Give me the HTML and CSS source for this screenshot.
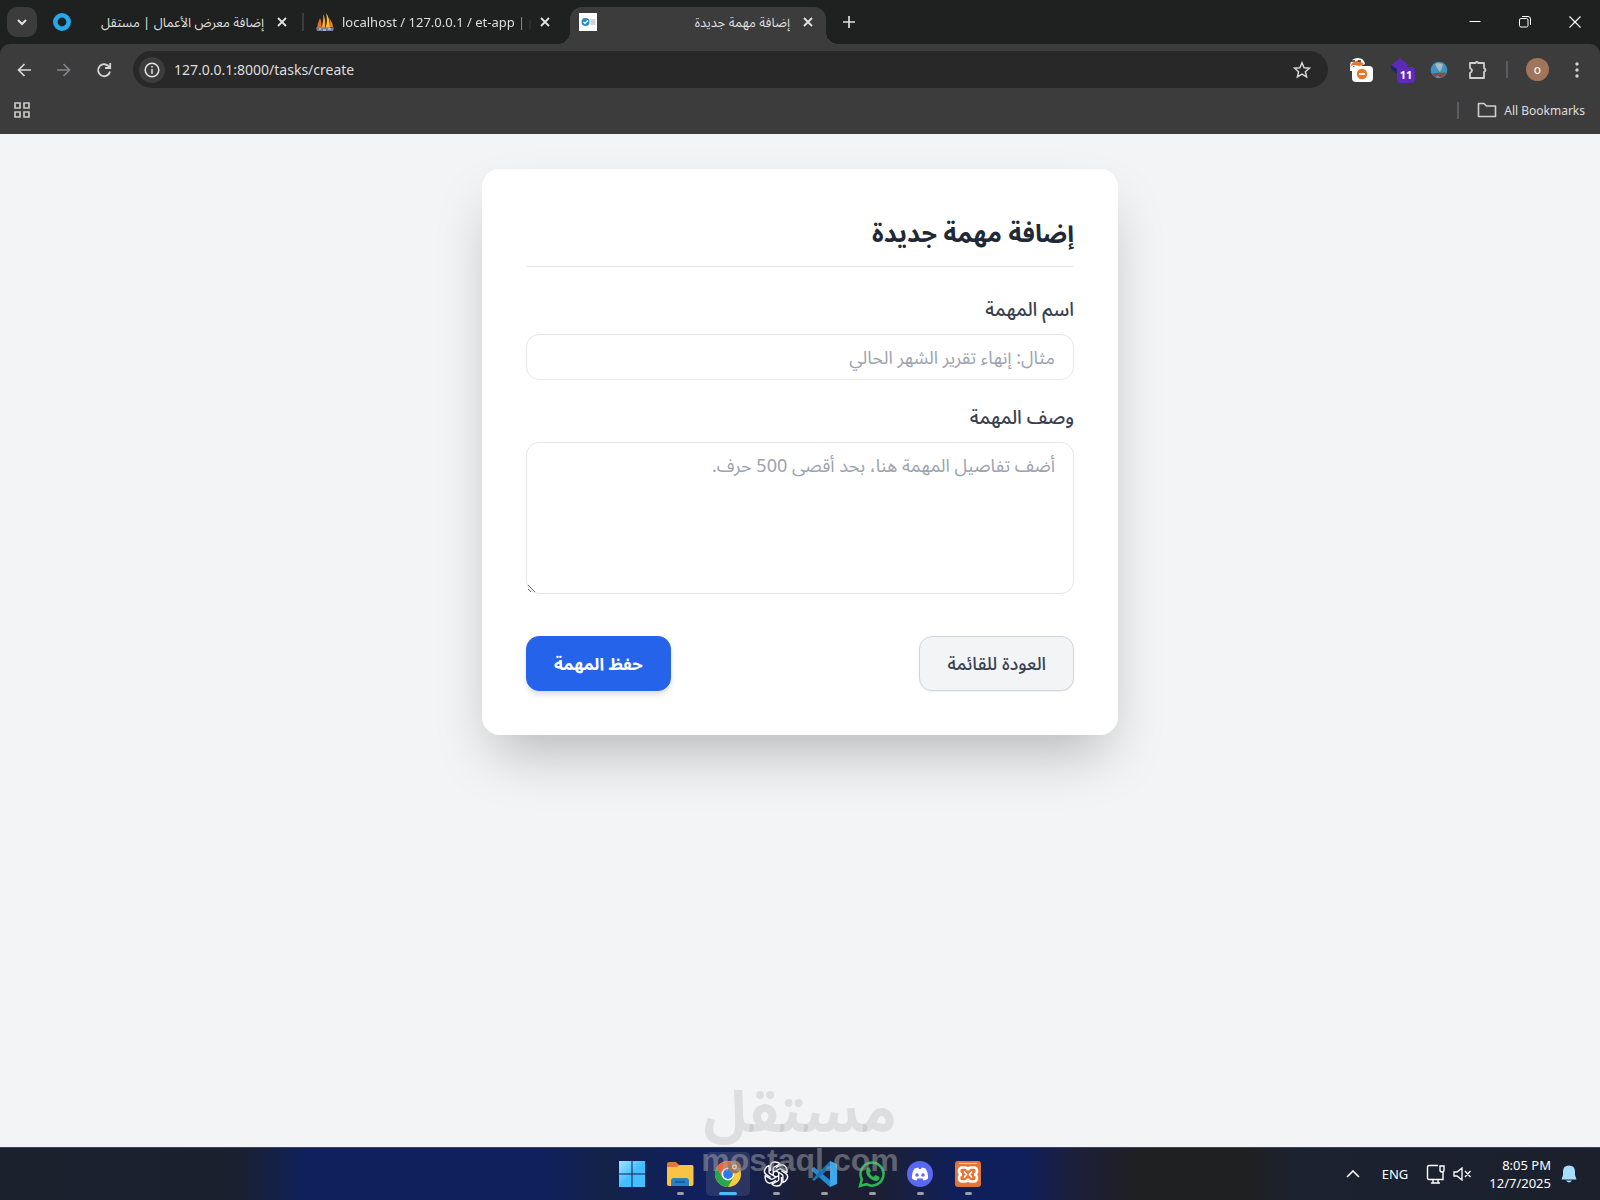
FILE: index.html
```html
<!DOCTYPE html>
<html lang="en">
  <head>
    <meta charset="UTF-8">
    <meta name="viewport" content="width=device-width, initial-scale=1.0">
    <title>إضافة مهمة جديدة</title>
    <link rel="stylesheet" href="styles.css">
  </head>
  <body>
    <!-- Browser window -->
    <header class="browser">
      <div class="tab-strip">
        <button class="tab-search" aria-label="Search tabs">
          <svg width="12" height="12" viewBox="0 0 12 12"><path d="M2 4l4 4 4-4" fill="none" stroke="#e3e3e3" stroke-width="2"/></svg>
        </button>
        <div class="tab tab-first">
          <svg width="18" height="18" viewBox="0 0 18 18"><circle cx="9" cy="9" r="6.7" fill="none" stroke="#26a9ec" stroke-width="4.6"/></svg>
          <a class="tab-title" dir="rtl" href="#">إضافة معرض الأعمال | مستقل</a>
          <button class="close" aria-label="Close"><svg width="10" height="10" viewBox="0 0 10 10"><path d="M1 1l8 8M9 1l-8 8"/></svg></button>
        </div>
        <div class="tab tab-second">
          <svg width="18" height="18" viewBox="0 0 18 18"><path d="M1 15Q2 9 4 5Q6 8 5 15z" fill="#d9702f"/><path d="M5 15Q8 8 7 1Q10 6 9 15z" fill="#f7a623"/><path d="M9.500 15Q12 8 10 0Q14 5 14 15z" fill="#f9bd3a"/><path d="M14 14Q15 9 13 5Q17 10 17 14z" fill="#ee7f2c"/><path d="M0 14.500h18l-1 3.500H1z" fill="#777a9b"/><path d="M3 16h2m2 1h3m2-1h3" stroke="#dcdcec"/></svg>
          <a class="tab-title fade" href="#">localhost / 127.0.0.1 / et-app | p</a>
          <button class="close" aria-label="Close"><svg width="10" height="10" viewBox="0 0 10 10"><path d="M1 1l8 8M9 1l-8 8"/></svg></button>
        </div>
        <div class="tab tab-active">
          <svg width="18" height="18" viewBox="0 0 18 18"><path fill="#fff" d="M0 0h18v18H0z"/><circle cx="6.5" cy="9" r="4" fill="#2590c5"/><path d="M4.500 9l1.500 1.500 3-3" fill="none" stroke="#fff" stroke-width="1.200"/><path d="M11.500 7h5M11.500 9h5M11.500 11h5" stroke="#9ab"/></svg>
          <a class="tab-title" dir="rtl" href="#">إضافة مهمة جديدة</a>
          <button class="close" aria-label="Close"><svg width="10" height="10" viewBox="0 0 10 10"><path d="M1 1l8 8M9 1l-8 8"/></svg></button>
        </div>
        <button class="new-tab" aria-label="New tab"><svg width="12" height="12" viewBox="0 0 12 12"><path d="M6 0v12M0 6h12" stroke="#dedede" stroke-width="1.700"/></svg></button>
        <div class="window-buttons">
          <button aria-label="Minimize"><svg width="12" height="12" viewBox="0 0 12 12"><path d="M.500 5.500h11" stroke="#fff"/></svg></button>
          <button aria-label="Restore"><svg width="12" height="12" viewBox="0 0 12 12"><path d="M.500 4q0-1.500 1.500-1.500h5.500q1.500 0 1.500 1.500v5.500q0 1.500-1.500 1.500H2Q.500 11 .500 9.500zM3 .500h6q2.500 0 2.500 2.500v6" fill="none" stroke="#fff"/></svg></button>
          <button aria-label="Close window"><svg width="12" height="12" viewBox="0 0 12 12"><path d="M.500.500l11 11M11.500.500l-11 11" stroke="#fff" stroke-width="1.200"/></svg></button>
        </div>
      </div>

      <div class="toolbar">
        <button class="nav-btn" aria-label="Back"><svg width="14" height="14" viewBox="0 0 14 14"><path d="M14 7H1.500M7.500 1l-6 6 6 6" fill="none" stroke="#d6d6d6" stroke-width="1.700"/></svg></button>
        <button class="nav-btn" aria-label="Forward"><svg width="14" height="14" viewBox="0 0 14 14"><path d="M0 7h12.500M6.500 1l6 6-6 6" fill="none" stroke="#85868a" stroke-width="1.600"/></svg></button>
        <button class="nav-btn" aria-label="Reload"><svg width="16" height="16" viewBox="0 0 16 16"><path d="M13.200 5A6 6 0 1 0 14 9.500M14.200 1v5H9" fill="none" stroke="#d6d6d6" stroke-width="1.800"/></svg></button>
        <div class="address-bar">
          <button class="site-info" aria-label="Site information"><svg width="16" height="16" viewBox="0 0 16 16"><circle cx="8" cy="8" r="6.800" fill="none" stroke="#e3e3e3" stroke-width="1.500"/><path d="M8 7v5M8 4v1.600" stroke="#e3e3e3" stroke-width="1.500"/></svg></button>
          <input class="url" type="text" aria-label="Address" value="127.0.0.1:8000/tasks/create">
          <button aria-label="Bookmark this page"><svg width="18" height="18" viewBox="0 0 18 18"><path d="M9 1.800l2.100 4.900 5.300.500-4 3.500 1.200 5.200L9 13.100l-4.600 2.800 1.200-5.200-4-3.500 5.300-.500z" fill="none" stroke="#d6d6d6" stroke-width="1.500"/></svg></button>
        </div>
        <div class="extensions">
          <button aria-label="Ad filter"><svg width="26" height="26" viewBox="0 0 26 26"><path d="M2 8Q3 1 10 1q6 0 7 6l-4 2H5v5H2z" fill="#fff"/><path d="M4 6l6-3 6 4-4 2-7-1-3 2z" fill="#e8762c"/><path d="M3 4h4M10 4h3" stroke="#333" stroke-width="1.500"/><rect x="4" y="9" width="21" height="16" rx="4" fill="#fff"/><circle cx="14" cy="17" r="5.200" fill="#e8762c"/><path d="M11 17h6" stroke="#fff" stroke-width="1.800"/></svg></button>
          <button class="ext-count" aria-label="Extension, 11 items"><svg width="26" height="26" viewBox="0 0 26 26"><path d="M2 8l9-7 9 7-9 8z" fill="#5b2bb5"/><path d="M2 8v4l9 7v-5z" fill="#182a66"/></svg><span class="badge">11</span></button>
          <button class="globe" aria-label="Globe"><svg width="18" height="18" viewBox="0 0 18 18"><circle cx="9" cy="9" r="8.300" fill="#3d96c1"/><path d="M5 3l3-1 5 1-1 4-2 4-3-4z" fill="#a9b8c1"/><path d="M2 12.500q6-1 14-1-2 5-7 5t-7-4z" fill="#924838"/><path d="M7 14l4 3H6z" fill="#33a1d6"/></svg></button>
          <button aria-label="Extensions"><svg width="20" height="20" viewBox="0 0 20 20"><path d="M2 3h5.500q1-2 3 0H16v5q3 2 0 4v6H2v-5q4-2.500 0-5z" fill="none" stroke="#cfcfcf" stroke-width="1.800" stroke-linejoin="round"/></svg></button>
        </div>
        <span class="divider"></span>
        <button class="profile" aria-label="Profile">o</button>
        <button class="menu" aria-label="Menu"><svg width="4" height="18" viewBox="0 0 4 18"><g fill="#d2d2d2"><circle cx="2" cy="3" r="1.700"/><circle cx="2" cy="9" r="1.700"/><circle cx="2" cy="15" r="1.700"/></g></svg></button>
      </div>

      <nav class="bookmarks">
        <button aria-label="Apps"><svg width="16" height="16" viewBox="0 0 16 16"><path d="M1 1h5v5H1zM10 1h5v5h-5zM1 10h5v5H1zM10 10h5v5h-5z" fill="none" stroke="#c9c9c5" stroke-width="1.700"/></svg></button>
        <span class="divider push"></span>
        <a class="all-bookmarks" href="#">
          <svg width="20" height="16" viewBox="0 0 20 16"><path d="M1.500 1.500h5.500l2.500 2.500h9v10.500h-17z" fill="none" stroke="#cfcfcf" stroke-width="1.600" stroke-linejoin="round"/></svg>
          All Bookmarks
        </a>
      </nav>
    </header>

    <!-- Task page -->
    <main class="page" dir="rtl" lang="ar">
      <form class="card">
        <h1>إضافة مهمة جديدة</h1>
        <label for="name">اسم المهمة</label>
        <input id="name" class="field" type="text" placeholder="مثال: إنهاء تقرير الشهر الحالي">
        <label for="description">وصف المهمة</label>
        <textarea id="description" class="field" placeholder="أضف تفاصيل المهمة هنا، بحد أقصى 500 حرف."></textarea>
        <div class="actions">
          <a class="btn btn-back" href="#">العودة للقائمة</a>
          <button class="btn btn-save" type="button">حفظ المهمة</button>
        </div>
      </form>
    </main>

    <div class="watermark" aria-hidden="true">
      <span class="mark-ar" lang="ar">مستقل</span>
      <span class="mark-en">mostaql.com</span>
    </div>

    <!-- Taskbar -->
    <footer class="taskbar">
      <div class="apps">
        <button class="app" aria-label="Start"><svg width="26" height="26" viewBox="0 0 26 26"><defs><linearGradient id="win" x2="1" y2="1"><stop stop-color="#a4e3ff"/><stop offset=".5" stop-color="#42bfff"/></linearGradient></defs><path fill="url(#win)" d="M0 0h12.500v12.500H0zM13.500 0H26v12.500H13.500zM0 13.500h12.500V26H0zM13.500 13.500H26V26H13.500z"/></svg></button>
        <button class="app running" aria-label="File Explorer"><svg width="28" height="26" viewBox="0 0 28 26"><path d="M1 3q0-2 2-2h7l3 3v4H1z" fill="#e27b2c"/><path d="M1 6h10l2-2h13q1.500 0 1.500 2v17q0 2-2 2H3q-2 0-2-2z" fill="#fbc346"/><path d="M5 25v-5q0-3 3-3h12q3 0 3 3v5z" fill="#2283bd"/><path d="M9 21h10" stroke="#176095" stroke-width="2"/></svg></button>
        <button class="app current" aria-label="Google Chrome"><svg width="28" height="28" viewBox="0 0 28 28"><circle cx="14" cy="14" r="13" fill="#f9cb3a"/><path d="M2.700 7.500A13 13 0 0 1 25.300 7.500H14L8.400 17.200z" fill="#e9663f"/><path d="M2.700 7.500A13 13 0 0 0 14 27l5.600-9.800H8.400z" fill="#29a64c"/><circle cx="14" cy="14" r="6.400" fill="#fff"/><circle cx="14" cy="14" r="4.900" fill="#2879ed"/><circle cx="20.500" cy="7" r="6.500" fill="#a07558"/><circle cx="20.500" cy="7" r="1.800" fill="none" stroke="#fff" stroke-width="1.200"/></svg></button>
        <button class="app running" aria-label="ChatGPT"><svg width="26" height="26" viewBox="-13 -13 26 26"><defs><path id="petal" d="M-5.500-3V-7.200Q-5.500-12-.900-12 2-12 4-10.200L-1.700-7Q-2.700-6.400-2.700-5.300V1.600"/></defs><g fill="none" stroke="#fff" stroke-width="1.400" stroke-linejoin="round"><use href="#petal"/><use href="#petal" transform="rotate(60)"/><use href="#petal" transform="rotate(120)"/><use href="#petal" transform="rotate(180)"/><use href="#petal" transform="rotate(240)"/><use href="#petal" transform="rotate(300)"/></g></svg></button>
        <button class="app running" aria-label="Visual Studio Code"><svg width="26" height="26" viewBox="0 0 26 26"><path d="M1 7.500l2-1.500 16 13v7L1 10z" fill="#2489cf"/><path d="M1 18.500L19 0v7L3 20z" fill="#1673b5"/><path d="M19 0l7 3v20l-7 3z" fill="#3ba9ee"/></svg></button>
        <button class="app running" aria-label="WhatsApp"><svg width="28" height="28" viewBox="0 0 28 28"><path d="M2 26l1.800-6.600A11.500 11.500 0 1 1 8.500 24.200z" fill="none" stroke="#29b853" stroke-width="2.500"/><path d="M9 8l2-1 2 4-1.500 2q1.500 3 4 4l2-2 4 2q0 3-3 4-4 0-8-4-4-5-1.500-9z" fill="#29b853"/></svg></button>
        <button class="app running" aria-label="Discord"><svg width="26" height="26" viewBox="0 0 26 26"><circle cx="13" cy="13" r="13" fill="#5969f3"/><path d="M7.500 7.500L11 6.500l1 1.500h2l1-1.500 3.500 1q3 4.500 2.500 10-2 2-4.500 2l-1-2h-5l-1 2Q7 19.500 5 17.500 4.500 12 7.500 7.500z" fill="#fff"/><circle cx="10" cy="14" r="1.700" fill="#5969f3"/><circle cx="16" cy="14" r="1.700" fill="#5969f3"/></svg></button>
        <button class="app running" aria-label="XAMPP"><svg width="26" height="26" viewBox="0 0 26 26"><rect width="26" height="26" rx="3" fill="#e57535"/><path d="M4 2.500h18" stroke="#f7c9ad"/><path d="M7 6.500h3q3 0 3 3 0-3 3-3h3q3 0 3 3.500T19 13.500q3 0 3 3.500t-3 3.500h-3q-3 0-3-3 0 3-3 3H7q-3 0-3-3.500t3-3.500Q4 13.500 4 10t3-3.500z" fill="#e57535" stroke="#fff" stroke-width="2.600"/><path d="M9 10.500l2.500 3-2.500 3M17 10.500l-2.500 3 2.500 3" fill="none" stroke="#fff" stroke-width="1.600"/></svg></button>
      </div>
      <div class="tray">
        <button aria-label="Show hidden icons"><svg width="14" height="8" viewBox="0 0 14 8"><path d="M1 7l6-6 6 6" fill="none" stroke="#fff" stroke-width="1.600"/></svg></button>
        <button class="lang">ENG</button>
        <button class="quick" aria-label="Network and sound">
          <svg width="20" height="20" viewBox="0 0 20 20"><path d="M12 1.500H3q-1.500 0-1.500 1.500v11q0 1.500 1.500 1.500h14V8M7 16v3M12 16v3M5 19h9M14 2h4v4q0 2-2 2t-2-2z" fill="none" stroke="#fff" stroke-width="1.400"/></svg>
          <svg width="18" height="14" viewBox="0 0 18 14"><path d="M1 5h3l5-4v12L4 9H1zM12 4l5.500 6M17.500 4L12 10" fill="none" stroke="#fff" stroke-width="1.300"/></svg>
        </button>
        <button class="clock"><span>8:05 PM</span><span>12/7/2025</span></button>
        <button aria-label="Notifications"><svg width="16" height="18" viewBox="0 0 16 18"><path d="M8 .500Q14 .500 14 6.500V10l1.500 4.500H.500L2 10V6.500Q2 .500 8 .500zM5 15.500h6q-3 4-6 0z" fill="#a8ddfb"/></svg></button>
      </div>
    </footer>
  </body>
</html>
```
FILE: styles.css
```css
* {
  box-sizing: border-box;
}

body {
  margin: 0;
  min-height: 100vh;
  display: flex;
  flex-direction: column;
  position: relative;
  font-family: "Noto Sans", "Noto Sans Arabic", "DejaVu Sans", sans-serif;
  background-color: #f3f4f6;
}

button {
  padding: 0;
  border: 0;
  background: none;
  color: inherit;
  font: inherit;
}

a {
  color: inherit;
  text-decoration: none;
}

svg {
  display: block;
  flex: none;
}

/* Browser */
.browser {
  background-color: #1f2120;
  color: #dedede;
  font-size: 13px;
}

.tab-strip {
  display: flex;
  align-items: center;
  height: 44px;
  padding-left: 7px;
}

.tab-search {
  display: grid;
  place-items: center;
  width: 30px;
  height: 30px;
  border-radius: 10px;
  background-color: #3c3c3c;
}

.tab {
  display: flex;
  align-items: center;
  gap: 9px;
  height: 30px;
}

.tab-first {
  width: 267px;
  padding: 0 15px 0 16px;
  border-right: 2px solid #3c3c3c;
  height: 18px;
}

.tab-second {
  gap: 8px;
  width: 266px;
  padding: 0 20px 0 12px;
}

.tab-active {
  position: relative;
  width: 256px;
  height: 37px;
  align-self: flex-end;
  padding: 0 13px 7px 9px;
  border-radius: 12px 12px 0 0;
  background-color: #3c3c3c;
}

/* Flared feet of the active tab */
.tab-active::before,
.tab-active::after {
  content: "";
  position: absolute;
  bottom: 0;
  width: 12px;
  height: 12px;
}

.tab-active::before {
  right: 100%;
  background: radial-gradient(circle at 0 0, transparent 12px, #3c3c3c 12px);
}

.tab-active::after {
  left: 100%;
  background: radial-gradient(circle at 100% 0, transparent 12px, #3c3c3c 12px);
}

.tab-title {
  flex: 1;
  min-width: 0;
  overflow: hidden;
  white-space: nowrap;
  line-height: 24px;
}

.tab .close {
  padding-left: 4px;
}

.tab-second .close {
  padding-left: 0;
}

.fade {
  mask-image: linear-gradient(to right, #000 90%, transparent);
}

.close path {
  stroke: #e3e3e3;
  stroke-width: 1.8;
}

.new-tab {
  padding: 8px 17px;
}

.window-buttons {
  display: flex;
  margin-left: auto;
}

.window-buttons button {
  display: grid;
  place-items: center;
  width: 50px;
  height: 44px;
}

.toolbar {
  display: flex;
  align-items: center;
  height: 51px;
  padding: 0 21px 0 4px;
  border-radius: 10px 10px 0 0;
  background-color: #3c3c3c;
}

.nav-btn {
  display: grid;
  place-items: center;
  width: 40px;
  height: 36px;
}

.address-bar {
  display: flex;
  flex: 1;
  align-items: center;
  height: 37px;
  margin-left: 9px;
  padding: 0 17px 0 6px;
  border-radius: 19px;
  background-color: #282828;
}

.site-info {
  display: grid;
  place-items: center;
  width: 26px;
  height: 26px;
  border-radius: 50%;
  background-color: #3c3c3c;
}

.url {
  flex: 1;
  padding: 0 9px;
  border: 0;
  outline: 0;
  background: none;
  color: #dedede;
  font-family: inherit;
  font-size: 14px;
}

.extensions {
  display: flex;
  align-items: center;
  gap: 15px;
  margin-left: 20px;
}

.ext-count {
  position: relative;
}

.globe {
  margin-right: 5px;
}

.badge {
  position: absolute;
  right: 0;
  bottom: 0;
  width: 18px;
  border-radius: 4px;
  background-color: #5d2bb8;
  color: #fff;
  font-size: 11px;
  font-weight: bold;
  line-height: 16px;
}

.divider {
  width: 2px;
  height: 17px;
  margin: 0 18px;
  background-color: #5b5c61;
}

.profile {
  width: 23px;
  height: 23px;
  border-radius: 50%;
  background-color: #a1755c;
  color: #fff;
  font-size: 12px;
  line-height: 20px;
}

.menu {
  margin-left: 26px;
}

.bookmarks {
  display: flex;
  align-items: center;
  height: 39px;
  padding: 0 15px 9px 14px;
  background-color: #3c3c3c;
}

.push {
  margin-left: auto;
}

.all-bookmarks {
  display: flex;
  align-items: center;
  gap: 7px;
  font-size: 12px;
}

/* Page */
.page {
  flex: 1;
  padding: 35px 20px;
}

.card {
  max-width: 636px;
  margin: 0 auto;
  padding: 44px;
  border-radius: 18px;
  background-color: #fff;
  box-shadow: 0 28px 56px -12px rgba(0, 0, 0, 0.25);
}

.card h1 {
  margin: 0 0 26px;
  padding-bottom: 15px;
  border-bottom: 1px solid #e5e7eb;
  color: #1f2937;
  font-size: 25px;
  line-height: 38px;
}

.card label {
  display: block;
  margin-bottom: 8px;
  color: #374151;
  font-size: 19px;
  font-weight: 500;
  line-height: 33px;
}

.field {
  display: block;
  width: 100%;
  height: 46px;
  margin-bottom: 21px;
  padding: 8px 18px;
  border: 1px solid #e5e7eb;
  border-radius: 13px;
  background-color: #fff;
  font-family: inherit;
  font-size: 18px;
  line-height: 28px;
}

.field::placeholder {
  color: #9ca3af;
}

textarea.field {
  height: 152px;
  margin-bottom: 42px;
  resize: vertical;
}

.actions {
  display: flex;
  justify-content: space-between;
}

.btn {
  height: 55px;
  padding: 0 27px;
  border: 1px solid #d1d5db;
  border-radius: 13px;
  font-size: 18px;
  font-weight: 500;
  line-height: 53px;
}

.btn-back {
  background-color: #f3f4f6;
  color: #374151;
  box-shadow: 0 1px 2px rgba(0, 0, 0, 0.06);
}

.btn-save {
  border-color: #2563eb;
  background-color: #2563eb;
  color: #fff;
  font-size: 17px;
  font-weight: bold;
  box-shadow: 0 4px 6px -1px rgba(0, 0, 0, 0.15);
}

/* Watermark lies over the page and the taskbar */
.watermark {
  position: absolute;
  right: 0;
  bottom: 24px;
  left: 0;
  z-index: 1;
  display: flex;
  flex-direction: column;
  align-items: center;
  color: rgba(155, 155, 155, 0.25);
  font-weight: bold;
  pointer-events: none;
}

.mark-ar {
  font-size: 58px;
  line-height: 68px;
}

.mark-en {
  color: rgba(165, 165, 170, 0.5);
  font-family: "Liberation Sans", Arial, sans-serif;
  font-size: 32px;
  line-height: 32px;
}

/* Taskbar */
.taskbar {
  display: grid;
  grid-template-columns: 1fr auto 1fr;
  align-items: center;
  height: 53px;
  border-top: 1px solid #3c4257;
  background: linear-gradient(to right, #1b222d 0, #1b2030 15%, #10205c 19%, #10205c 34%, #132248 38%, #11205a 42%, #11205a 45%, #1c1f33 50%, #1c1f33 55%, #0f1f5c 60%, #0f1f5c 64%, #1c1f3c 67%, #1f2022 71%, #1f2022 78%, #1b2230 81%, #1b202c 100%);
  color: #fff;
}

.apps {
  display: flex;
  grid-column: 2;
  gap: 4px;
}

.app {
  position: relative;
  display: grid;
  place-items: center;
  width: 44px;
  height: 44px;
  border-radius: 5px;
}

.running::after,
.current::after {
  content: "";
  position: absolute;
  bottom: 1px;
  left: 19px;
  width: 7px;
  height: 3px;
  border-radius: 2px;
  background-color: #9b9fa8;
}

.current {
  background-color: rgba(255, 255, 255, 0.1);
}

.current::after {
  left: 13px;
  width: 18px;
  background-color: #48bdfc;
}

.tray {
  display: flex;
  align-items: center;
  justify-self: end;
  gap: 10px;
  padding-right: 23px;
  font-size: 13px;
}

.lang {
  padding: 0 8px 0 12px;
}

.quick {
  display: flex;
  align-items: center;
  gap: 7px;
}

.clock {
  display: grid;
  padding-left: 8px;
  text-align: right;
  line-height: 18px;
}
```
